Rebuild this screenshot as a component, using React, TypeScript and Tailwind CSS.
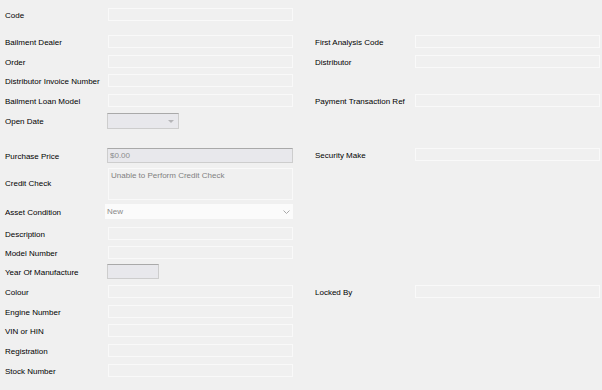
import React from "react";

type Kind = "text" | "sunken" | "combo" | "multi" | "select";

type Field = { label: string; kind?: Kind; width?: string; value?: string };

type RowDef = { h: string; left?: Field; right?: Field };

const rows: RowDef[] = [
  { h: "h-[27px]", left: { label: "Code" } },
  { h: "h-[20px]", left: { label: "Bailment Dealer" }, right: { label: "First Analysis Code" } },
  { h: "h-[19px]", left: { label: "Order" }, right: { label: "Distributor" } },
  { h: "h-[20px]", left: { label: "Distributor Invoice Number" } },
  { h: "h-[19px]", left: { label: "Bailment Loan Model" }, right: { label: "Payment Transaction Ref" } },
  { h: "h-[35px]", left: { label: "Open Date", kind: "combo", width: "w-[72px]" } },
  { h: "h-[20px]", left: { label: "Purchase Price", kind: "sunken", value: "$0.00" }, right: { label: "Security Make" } },
  { h: "h-[36px]", left: { label: "Credit Check", kind: "multi", value: "Unable to Perform Credit Check" } },
  { h: "h-[23px]", left: { label: "Asset Condition", kind: "select", value: "New" } },
  { h: "h-[19px]", left: { label: "Description" } },
  { h: "h-[18px]", left: { label: "Model Number" } },
  { h: "h-[21px]", left: { label: "Year Of Manufacture", kind: "sunken", width: "w-[52px]" } },
  { h: "h-[20px]", left: { label: "Colour" }, right: { label: "Locked By" } },
  { h: "h-[19px]", left: { label: "Engine Number" } },
  { h: "h-[20px]", left: { label: "VIN or HIN" } },
  { h: "h-[20px]", left: { label: "Registration" } },
  { h: "h-[13px]", left: { label: "Stock Number" } },
];

const labelH: Record<Kind, string> = {
  text: "h-[15px]",
  sunken: "h-[17px]",
  combo: "h-[17px]",
  select: "h-[17px]",
  multi: "h-[32px]",
};

function Input({ f }: { f: Field }) {
  const kind = f.kind ?? "text";
  if (kind === "sunken") {
    return (
      <div
        className={`${f.width ?? "w-[186px]"} h-[15px] border border-[#cdcdcd] border-t-[#a9a9a9] bg-[#e8e8ec] px-[2px] text-[8px] leading-[13px] text-[#8c8c8c]`}
      >
        {f.value}
      </div>
    );
  }
  if (kind === "combo") {
    return (
      <div
        className={`${f.width} h-[16px] border border-[#cdcdcd] border-t-[#a9a9a9] bg-[#e8e8ec] flex items-center justify-end pr-[4px]`}
      >
        <svg width="6" height="3" viewBox="0 0 6 3">
          <path d="M0 0h6L3 3z" fill="#b5b5b8" />
        </svg>
      </div>
    );
  }
  if (kind === "multi") {
    return (
      <div className="w-[185px] h-[32px] ml-px border border-[#f9f9f9] bg-[#f0f0f0] px-[2px] text-[8px] leading-[13px] text-[#808080]">
        {f.value}
      </div>
    );
  }
  if (kind === "select") {
    return (
      <div className="w-[188px] -ml-[2px] h-[15px] bg-[#fbfbfb] flex items-center justify-between pl-[2px] pr-[3px] text-[8px] text-[#8a8a8a]">
        <span>{f.value}</span>
        <svg width="7" height="4" viewBox="0 0 7 4">
          <path d="M0.5 0.5L3.5 3.5L6.5 0.5" fill="none" stroke="#a8a8a8" strokeWidth="1" />
        </svg>
      </div>
    );
  }
  return <div className="w-[185px] h-[13px] ml-px border border-[#f9f9f9] bg-[#f0f0f0]" />;
}

function Cell({ f, labelW }: { f?: Field; labelW: string }) {
  if (!f) return <div className="flex" />;
  const kind = f.kind ?? "text";
  return (
    <div className="flex items-start">
      <div className={`${labelW} ${labelH[kind]} flex items-center text-[8px] text-[#000] whitespace-nowrap`}>
        {f.label}
      </div>
      <Input f={f} />
    </div>
  );
}

export default function App() {
  return (
    <div
      className="w-[602px] h-[390px] bg-[#f0f0f0] pt-[8px] overflow-hidden"
      style={{ fontFamily: '"Liberation Sans", Arial, sans-serif' }}
    >
      {rows.map((r, i) => (
        <div key={i} className={`${r.h} grid grid-cols-[315px_287px]`}>
          <div className="pl-[5px]">
            <Cell f={r.left} labelW="w-[102px]" />
          </div>
          <div>
            <Cell f={r.right} labelW="w-[99px]" />
          </div>
        </div>
      ))}
    </div>
  );
}
